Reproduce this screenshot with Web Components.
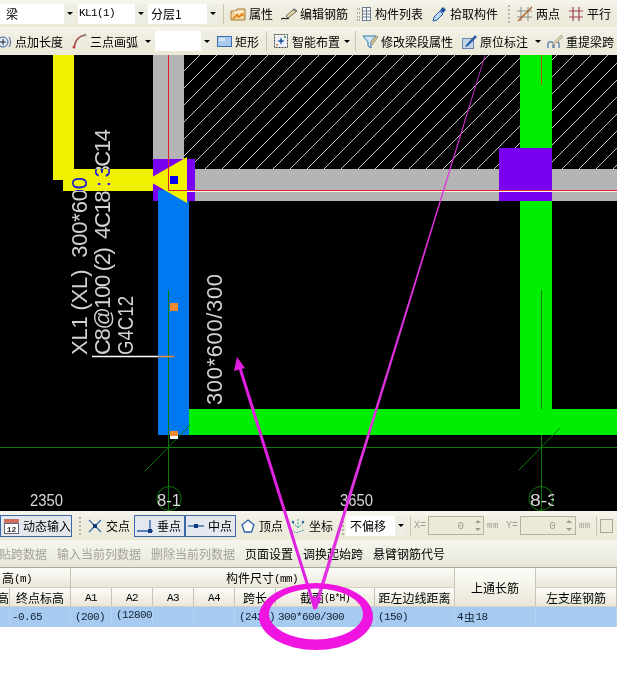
<!DOCTYPE html>
<html lang="zh">
<head>
<meta charset="utf-8">
<title>梁</title>
<style>
  html, body { margin: 0; background: #fff; }
  body { width: 617px; height: 687px; overflow: hidden; position: relative; font-family: "Noto Sans CJK SC", "Liberation Sans", sans-serif; font-size: 12px; color: #000; }
  page-shell { width: 617px; }
</style>
</head>
<body>
<page-shell>
  <cad-toolbar h="27">
    <combo-box style="width:75px" pad="6">梁</combo-box>
    <combo-box style="width:68px;margin-left:3px" pad="1" mono>KL1(1)</combo-box>
    <combo-box style="width:70px;margin-left:2px" pad="3">分层1</combo-box>
    <bar-sep style="margin-left:5px"></bar-sep>
    <tool-btn icon="attr" style="margin-left:6px">属性</tool-btn>
    <tool-btn icon="pencil" style="margin-left:8px">编辑钢筋</tool-btn>
    <tool-btn icon="list" style="margin-left:8px">构件列表</tool-btn>
    <tool-btn icon="dropper" style="margin-left:8px">拾取构件</tool-btn>
    <bar-sep grip style="margin-left:10px"></bar-sep>
    <tool-btn icon="twopoint" style="margin-left:7px">两点</tool-btn>
    <tool-btn icon="parallel" style="margin-left:8px">平行</tool-btn>
  </cad-toolbar>
  <cad-toolbar h="28">
    <tool-btn icon="addlen" style="margin-left:-4px">点加长度</tool-btn>
    <tool-btn icon="arc" style="margin-left:8px">三点画弧</tool-btn>
    <drop-arrow style="margin-left:6px"></drop-arrow>
    <combo-box style="width:57px;margin-left:4px" pad="3"></combo-box>
    <tool-btn icon="rect" style="margin-left:4px">矩形</tool-btn>
    <bar-sep style="margin-left:7px"></bar-sep>
    <tool-btn icon="smart" style="margin-left:6px">智能布置</tool-btn>
    <drop-arrow style="margin-left:3px"></drop-arrow>
    <bar-sep style="margin-left:5px"></bar-sep>
    <tool-btn icon="filter" style="margin-left:6px">修改梁段属性</tool-btn>
    <tool-btn icon="note" style="margin-left:8px">原位标注</tool-btn>
    <drop-arrow style="margin-left:6px"></drop-arrow>
    <tool-btn icon="respan" style="margin-left:6px">重提梁跨</tool-btn>
  </cad-toolbar>
  <drawing-canvas></drawing-canvas>
  <cad-toolbar h="29">
    <tool-btn boxed icon="dynamic" style="width:72px">动态输入</tool-btn>
    <bar-sep grip style="margin-left:7px"></bar-sep>
    <tool-btn icon="cross" style="margin-left:6px">交点</tool-btn>
    <tool-btn boxed icon="perp" style="width:51px;margin-left:4px">垂点</tool-btn>
    <tool-btn boxed icon="mid" style="width:51px">中点</tool-btn>
    <tool-btn icon="vertex" style="margin-left:4px">顶点</tool-btn>
    <tool-btn icon="coord" style="margin-left:7px">坐标</tool-btn>
    <bar-sep grip style="margin-left:9px"></bar-sep>
    <combo-box style="width:60px;margin-left:2px" pad="4">不偏移</combo-box>
    <bar-sep style="margin-left:4px"></bar-sep>
    <spin-field label="X=" style="margin-left:3px"></spin-field>
    <spin-field label="Y=" style="margin-left:7px"></spin-field>
    <bar-sep style="margin-left:5px"></bar-sep>
    <check-box style="margin-left:3px"></check-box>
  </cad-toolbar>
  <action-bar>
    <action-link off style="margin-left:-1px">贴跨数据</action-link>
    <action-link off style="margin-left:10px">输入当前列数据</action-link>
    <action-link off style="margin-left:10px">删除当前列数据</action-link>
    <action-link style="margin-left:10px">页面设置</action-link>
    <action-link style="margin-left:10px">调换起始跨</action-link>
    <action-link style="margin-left:10px">悬臂钢筋代号</action-link>
  </action-bar>
  <beam-table></beam-table>
</page-shell>
<markup-layer></markup-layer>

<script>
// toolbar icons, 16x16 unless noted
const ICONS = {
  attr: `<path d="M1 5h5l1-2h8v11H1z" fill="#f3d9a0" stroke="#a87b35"/><path d="M3 13l4-4 2 2 3-3 2 2" fill="none" stroke="#e07a10" stroke-width="1.6"/><path d="M4 6h9" stroke="#fff"/>`,
  pencil: `<path d="M0 13c3-2 5 1 8-1" fill="none" stroke="#222" stroke-width="1.2"/><path d="M5 10l8-7 3 2-9 7z" fill="#e8d9a8" stroke="#444" stroke-width=".8"/><path d="M12 3l3 2" stroke="#777" stroke-width="2"/>`,
  list: `<path d="M1 3h3M1 7h3M1 11h3M1 14h3" stroke="#666" stroke-dasharray="1 1"/><rect x="6.500" y="1.500" width="8" height="13" fill="#fff" stroke="#6a7a90"/><path d="M6 5h9M6 8h9M6 11h9M10.500 2v12" stroke="#6a7a90"/>`,
  dropper: `<path d="M2 15l1-4 6-6 3 3-6 6z" fill="#bcd6f2" stroke="#1f5aa8"/><path d="M9 4l3-3 3 3-3 3z" fill="#1f4f9a"/>`,
  twopoint: `<path d="M4 1v14M11 1v14M0 5h15M0 11h15" stroke="#8a8a8a"/><path d="M1 15L15 1" stroke="#b05a20" stroke-width="1.2"/>`,
  parallel: `<path d="M5 1v14M11 1v14M1 5h14M1 11h14" stroke="#9a4a5a" stroke-width="1.200"/>`,
  addlen: `<circle cx="7" cy="9" r="5" fill="#dfeaf8" stroke="#3b5f95"/><path d="M7 6v6M4 9h6" stroke="#222"/><path d="M13 4c2 3 2 7 0 10" fill="none" stroke="#3b5f95"/>`,
  arc: `<path d="M3 15C4 8 8 3 14 2" fill="none" stroke="#a0504a" stroke-width="1.600"/><circle cx="3" cy="14" r="1.500" fill="#c04040"/><circle cx="14" cy="2" r="1.300" fill="#888"/>`,
  rect: `<rect x="1.500" y="3.500" width="14" height="10" fill="#a9c9ee" stroke="#3b6db0"/><rect x="3" y="5" width="6" height="3" fill="#d6e6f8"/>`,
  smart: `<rect x="1.500" y="1.500" width="13" height="13" fill="#eef2f8" stroke="#444" stroke-dasharray="2 1"/><path d="M8 4l1 3 3 1-3 1-1 3-1-3-3-1 3-1z" fill="#2b5aa0"/><circle cx="12" cy="4" r="1" fill="#2a8a40"/><circle cx="4" cy="12" r="1" fill="#d07020"/>`,
  filter: `<path d="M1 3h13l-5 6v6l-3-2V9z" fill="#cfe6f6" stroke="#2d78a8"/><path d="M8 10l6-7 2 1-6 8z" fill="#d8c890" stroke="#666" stroke-width=".6"/>`,
  note: `<rect x="1.500" y="5.500" width="11" height="10" fill="#c6d6ea" stroke="#6a86a8"/><path d="M5 12l9-10 2 2-9 9-3 1z" fill="#2b5fa8"/>`,
  respan: `<path d="M1 15v-4c0-3 5-3 5 0v4M7 15v-4c0-3 5-3 5 0v4" fill="none" stroke="#6a8ab0" stroke-width="1.500"/><path d="M5 11L14 2l2 2-9 8z" fill="#e0cfa8" stroke="#999" stroke-width=".6"/>`,
  dynamic: `<rect x="1.500" y="1.500" width="14" height="3" fill="#e06a5a" stroke="#a0584a" stroke-width=".6"/><rect x="1.500" y="5.500" width="14" height="10" fill="#fff" stroke="#667"/><text x="8.500" y="14" font-family="Liberation Mono" font-size="8" font-weight="bold" text-anchor="middle" fill="#333">12</text>`,
  cross: `<path d="M2 2l12 12M14 2L2 14" stroke="#3b6db0" stroke-width="1.300"/><rect x="6" y="6" width="4" height="4" fill="#123a80"/>`,
  perp: `<path d="M0 13h16M13 2v11" stroke="#2b5fa8" stroke-width="1.300"/><rect x="11" y="11" width="4" height="4" fill="#123a80"/>`,
  mid: `<path d="M0 8h16" stroke="#2b5fa8" stroke-width="1.300"/><rect x="6" y="6" width="4" height="4" fill="#123a80"/>`,
  vertex: `<path d="M8 2l6 5-2.500 7h-7L2 7z" fill="#fff" stroke="#2b5fa8" stroke-width="1.300"/>`,
  coord: `<path d="M1 12l5 3 8-3M8 1v9M3 5l5 5 5-5" fill="none" stroke="#3aa0a8" stroke-dasharray="2 1"/><circle cx="3" cy="4" r="1.200" fill="#2b5fa8"/><circle cx="13" cy="4" r="1.200" fill="#2b5fa8"/>`
};

class PageShell extends HTMLElement {
  constructor() {
    super();
    this.attachShadow({ mode: 'open' }).innerHTML = `
      <style>:host { display: flex; flex-direction: column; }</style><slot></slot>`;
  }
}

class CadToolbar extends HTMLElement {
  constructor() {
    super();
    this.attachShadow({ mode: 'open' }).innerHTML = `
      <style>
        :host { display: flex; align-items: center; overflow: hidden; flex: none;
          background: linear-gradient(#f7f6ee, #efeddf 35%, #ece9d8); }
      </style><slot></slot>`;
  }
  connectedCallback() { this.style.height = this.getAttribute('h') + 'px'; }
}

class ToolBtn extends HTMLElement {
  constructor() {
    super();
    this.attachShadow({ mode: 'open' });
  }
  connectedCallback() {
    this.shadowRoot.innerHTML = `
      <style>
        :host { display: inline-flex; align-items: center; flex: none; gap: 3px; white-space: nowrap; box-sizing: border-box; }
        :host([boxed]) { height: 22px; border: 1px solid #3b66a8; background: #e3e7ee; padding-left: 2px; gap: 4px; }
        svg { width: 16px; height: 16px; flex: none; display: block; }
      </style>
      <svg viewBox="0 0 16 16">${ICONS[this.getAttribute('icon')] || ''}</svg><slot></slot>`;
  }
}

class ComboBox extends HTMLElement {
  constructor() {
    super();
    this.attachShadow({ mode: 'open' });
  }
  connectedCallback() {
    const mono = this.hasAttribute('mono');
    this.shadowRoot.innerHTML = `
      <style>
        :host { display: flex; flex: none; height: 20px; box-sizing: border-box; }
        .val { flex: 1; min-width: 0; background: #fff; padding-left: ${this.getAttribute('pad') || 2}px; line-height: 19px;
          font-family: ${mono ? '"Liberation Mono", "Noto Sans CJK SC", monospace' : 'inherit'}; font-size: ${mono ? '11px' : 'inherit'};
          letter-spacing: ${mono ? '-.6px' : '0'}; white-space: nowrap; }
        .btn { flex: none; width: 11px; display: flex; align-items: center; justify-content: center; background: #eeede4; }
        i { width: 0; height: 0; border: 3px solid transparent; border-top: 3px solid #000; border-bottom: 0; border-left-width: 3px; }
      </style>
      <div class="val"><slot></slot></div><div class="btn"><i></i></div>`;
  }
}

class DropArrow extends HTMLElement {
  constructor() {
    super();
    this.attachShadow({ mode: 'open' }).innerHTML = `
      <style>
        :host { display: flex; flex: none; width: 7px; height: 14px; align-items: center; justify-content: center; }
        i { width: 0; height: 0; border: 3px solid transparent; border-top: 3px solid #000; border-bottom: 0; }
      </style><i></i>`;
  }
}

class BarSep extends HTMLElement {
  constructor() {
    super();
    this.attachShadow({ mode: 'open' }).innerHTML = `
      <style>
        :host { display: block; flex: none; width: 1px; height: 20px; background: #c9c6b4; }
        :host([grip]) { width: 2px; height: 18px; background: repeating-linear-gradient(#b8b6a8 0 2px, transparent 2px 4px); }
      </style>`;
  }
}

class SpinField extends HTMLElement {
  constructor() {
    super();
    this.attachShadow({ mode: 'open' });
  }
  connectedCallback() {
    this.shadowRoot.innerHTML = `
      <style>
        :host { display: flex; flex: none; align-items: center; color: #a09e90; font: 10px "Liberation Mono", monospace; }
        .box { width: 56px; height: 19px; margin: 0 3px 0 2px; box-sizing: border-box; border: 1px solid #b5b39f; background: #ece9d8;
          display: flex; align-items: center; justify-content: flex-end; font-size: 11px; }
        .spin { width: 11px; margin-left: 8px; display: flex; flex-direction: column; gap: 5px; align-items: center; }
        .spin i { width: 0; height: 0; border: 3px solid transparent; }
        .up { border-top: 0 !important; border-bottom-color: #a09e90 !important; }
        .dn { border-bottom: 0 !important; border-top-color: #a09e90 !important; }
        .mm { font-size: 9px; letter-spacing: .5px; }
      </style>
      <span>${this.getAttribute('label')}</span>
      <div class="box">0<div class="spin"><i class="up"></i><i class="dn"></i></div></div>
      <span class="mm">mm</span>`;
  }
}

class CheckBox extends HTMLElement {
  constructor() {
    super();
    this.attachShadow({ mode: 'open' }).innerHTML = `
      <style>:host { display: block; flex: none; width: 11px; height: 12px; border: 1px solid #a8a696; background: #ece9d8; }</style>`;
  }
}

class ActionBar extends HTMLElement {
  constructor() {
    super();
    this.attachShadow({ mode: 'open' }).innerHTML = `
      <style>
        :host { display: flex; align-items: center; flex: none; height: 27px; overflow: hidden;
          background: linear-gradient(#f6f5ee, #efeee4 60%, #e6e4d4); border-bottom: 1px solid #a8a89c; }
      </style><slot></slot>`;
  }
}

class ActionLink extends HTMLElement {
  constructor() {
    super();
    this.attachShadow({ mode: 'open' }).innerHTML = `
      <style>
        :host { display: block; flex: none; white-space: nowrap; }
        :host([off]) { color: #a3a299; }
      </style><slot></slot>`;
  }
}

class DrawingCanvas extends HTMLElement {
  constructor() {
    super();
    this.attachShadow({ mode: 'open' }).innerHTML = `
      <style>
        :host { display: block; flex: none; height: 456px; background: #000; }
        svg { display: block; }
        .lbl { font-family: "Liberation Sans", sans-serif; fill: #d2d2d2; white-space: pre; mix-blend-mode: difference; }
        .num { font-family: "Liberation Sans", sans-serif; fill: #d8d8d8; }
      </style>
      <!-- user space is page pixels, so y starts at 55 -->
      <svg width="617" height="456" viewBox="0 55 617 456">
        <defs>
          <pattern id="hatch" width="17" height="17" patternUnits="userSpaceOnUse">
            <path d="M0 17L17 0" stroke="#c8c8c8" stroke-width="1"/>
          </pattern>
          <clipPath id="axis3"><rect x="520" y="480" width="34" height="31"/></clipPath>
        </defs>
        <rect x="0" y="55" width="617" height="456" fill="#000"/>
        <rect x="184" y="55" width="336" height="114" fill="url(#hatch)"/>
        <rect x="552" y="55" width="65" height="114" fill="url(#hatch)"/>

        <rect x="153" y="55" width="31" height="110" fill="#b4b4b4"/>
        <rect x="195" y="169" width="422" height="32" fill="#b4b4b4"/>
        <rect x="520" y="55" width="32" height="380" fill="#00ee00"/>
        <rect x="189" y="409" width="428" height="26" fill="#00ee00"/>
        <rect x="158" y="190" width="31" height="245" fill="#0078f0"/>
        <rect x="499" y="148" width="53" height="53" fill="#7a00f0"/>
        <rect x="153" y="159" width="42" height="42" fill="#7a00f0"/>
        <rect x="158" y="190" width="29" height="13" fill="#0078f0"/>

        <path d="M53 55h21v114h79v22H63v-11H53z" fill="#f0f000"/>
        <path d="M147 180L187 157v46z" fill="#f0f000"/>
        <rect x="170" y="176" width="8" height="8" fill="#0000f0"/>

        <path d="M168.500 55V190.500H617" fill="none" stroke="#e0202c"/>
        <path d="M187 191.500H617" stroke="#f4f4f4"/>

        <path d="M0 447.500H617M168.500 290V511M541.500 290V409M541.500 435V511" stroke="#0c7a0c" fill="none"/>
        <path d="M541.500 55V85" stroke="#a85a10"/>
        <path d="M145 471L190 425M519 470L560 428" stroke="#0c7a0c" fill="none"/>
        <circle cx="169" cy="498.500" r="12" fill="none" stroke="#0c7a0c"/>
        <circle cx="541" cy="498.500" r="12" fill="none" stroke="#0c7a0c"/>

        <path d="M92 356.500H158" stroke="#fff" stroke-width="1.500"/>
        <path d="M158 356.500H174" stroke="#f08a30" stroke-width="1.500"/>
        <rect x="170" y="303" width="8" height="8" fill="#f08a30"/>
        <rect x="170" y="431" width="8" height="5" fill="#f08a30"/>
        <rect x="170" y="436" width="8" height="3" fill="#fff"/>

        <text class="lbl" font-size="22" transform="translate(87 355) rotate(-90)" textLength="178" lengthAdjust="spacing">XL1 (XL)  300*600</text>
        <text class="lbl" font-size="22" transform="translate(110 355) rotate(-90)" textLength="226" lengthAdjust="spacing">C8@100 (2)  4C18 : 3C14</text>
        <text class="lbl" font-size="22" transform="translate(133 355) rotate(-90)" textLength="59" lengthAdjust="spacingAndGlyphs">G4C12</text>
        <text class="lbl" font-size="22" transform="translate(222 405) rotate(-90)" textLength="131" lengthAdjust="spacing">300*600/300</text>

        <text class="num" x="30" y="506" font-size="17" textLength="33" lengthAdjust="spacingAndGlyphs">2350</text>
        <text class="num" x="340" y="506" font-size="17" textLength="33" lengthAdjust="spacingAndGlyphs">3650</text>
        <text class="num" x="157" y="506" font-size="17" textLength="24" lengthAdjust="spacingAndGlyphs">8-1</text>
        <text class="num" x="530" y="506" font-size="17" textLength="28" lengthAdjust="spacingAndGlyphs" clip-path="url(#axis3)">8-3</text>
      </svg>`;
  }
}

class BeamTable extends HTMLElement {
  constructor() {
    super();
    this.attachShadow({ mode: 'open' }).innerHTML = `
      <style>
        :host { display: grid; flex: none; overflow: hidden;
          grid-template-columns: 10px 61px repeat(5, 41px) 99px 80px 81px 81px;
          grid-template-rows: 20px 19px 20px; }
        div { box-sizing: border-box; display: flex; align-items: center; justify-content: center; white-space: nowrap; overflow: hidden;
          border-right: 1px solid #c6c5b6; }
        .h { background: linear-gradient(#fcfcf8, #f2f0e6 60%, #e9e7d8); border-bottom: 1px solid #d2d0c2; }
        .d { background: #a6caf0; border-right-color: #b7d2ef; justify-content: flex-start; padding-left: 4px;
          font: 11px "Liberation Mono", monospace; letter-spacing: -.6px; color: #123; }
        .l { justify-content: flex-start; }
        .r { justify-content: flex-end; }
        b { font: 400 11px "Liberation Mono", monospace; letter-spacing: -.6px; margin-top: 2px; }
        b.s { font-size: 10px; letter-spacing: -.8px; }
      </style>
      <div class="h l" style="grid-column:1/3;padding-left:2px">高<b>(m)</b></div>
      <div class="h" style="grid-column:3/10;padding-right:1px">构件尺寸<b>(mm)</b></div>
      <div class="h" style="grid-column:10;grid-row:1/3">上通长筋</div>
      <div class="h" style="grid-column:11"></div>

      <div class="h r">高</div>
      <div class="h">终点标高</div>
      <div class="h"><b>A1</b></div>
      <div class="h"><b>A2</b></div>
      <div class="h"><b>A3</b></div>
      <div class="h"><b>A4</b></div>
      <div class="h">跨长</div>
      <div class="h">截面<b class="s">(B*H)</b></div>
      <div class="h">距左边线距离</div>
      <div class="h" style="grid-column:11">左支座钢筋</div>

      <div class="d"></div>
      <div class="d" style="padding-left:2px">-0.65</div>
      <div class="d">(200)</div>
      <div class="d" style="align-items:flex-start;padding-top:2px">(12800</div>
      <div class="d"></div>
      <div class="d"></div>
      <div class="d">(2425)</div>
      <div class="d" style="padding-left:2px">300*600/300</div>
      <div class="d" style="padding-left:3px">(150)</div>
      <div class="d" style="padding-left:2px">4<span style="font:11px 'Noto Sans CJK SC',sans-serif;margin:0 1px">虫</span>18</div>
      <div class="d"></div>`;
  }
}

// hand drawn markup over the whole screenshot
class MarkupLayer extends HTMLElement {
  constructor() {
    super();
    this.attachShadow({ mode: 'open' }).innerHTML = `
      <style>
        :host { display: block; position: absolute; left: 0; top: 0; width: 617px; height: 687px; pointer-events: none; }
        svg { display: block; }
      </style>
      <svg width="617" height="687" viewBox="0 0 617 687">
        <!-- long stroke tapers from a hairline at the top -->
        <path d="M484.800 55L485.400 55.200L316.800 609L313.400 608z" fill="#e030e0"/>
        <path d="M315 609L240 368" stroke="#e020e0" stroke-width="3" fill="none"/>
        <path d="M237 357L234 371L245 368z" fill="#e020e0"/>
        <path d="M315 610L310 596L322 598z" fill="#e020e0"/>
        <path fill-rule="evenodd" fill="#f014e0" d="M259 616.500a57 33.500 0 1 0 114 0a57 33.500 0 1 0 -114 0z M269 614a47 25.500 0 1 0 94 0a47 25.500 0 1 0 -94 0z"/>
      </svg>`;
  }
}

customElements.define('page-shell', PageShell);
customElements.define('cad-toolbar', CadToolbar);
customElements.define('tool-btn', ToolBtn);
customElements.define('combo-box', ComboBox);
customElements.define('drop-arrow', DropArrow);
customElements.define('bar-sep', BarSep);
customElements.define('spin-field', SpinField);
customElements.define('check-box', CheckBox);
customElements.define('action-bar', ActionBar);
customElements.define('action-link', ActionLink);
customElements.define('drawing-canvas', DrawingCanvas);
customElements.define('beam-table', BeamTable);
customElements.define('markup-layer', MarkupLayer);
</script>
</body>
</html>
